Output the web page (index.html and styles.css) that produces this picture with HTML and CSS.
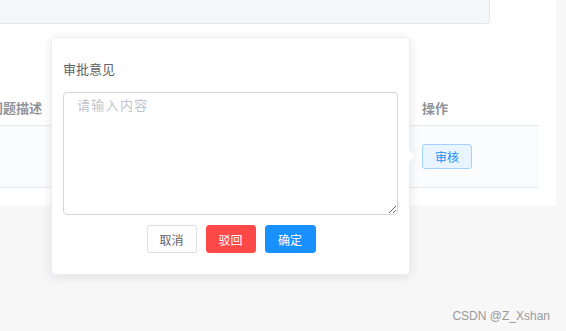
FILE: index.html
```html
<!DOCTYPE html>
<html lang="zh-CN">
<head>
    <meta charset="UTF-8">
    <title>审批</title>
    <link rel="stylesheet" href="styles.css">
</head>
<body>
    <div class="panel">
        <div class="filter-box"></div>

        <table class="grid">
            <thead>
                <tr>
                    <th class="col-desc">问题描述</th>
                    <th class="col-mid"></th>
                    <th class="col-op">操作</th>
                </tr>
            </thead>
            <tbody>
                <tr class="hover">
                    <td></td>
                    <td></td>
                    <td class="col-op"><button class="btn-audit">审核</button></td>
                </tr>
            </tbody>
        </table>
    </div>

    <div class="popover">
        <div class="popover-title">审批意见</div>
        <textarea class="opinion" placeholder="请输入内容"></textarea>
        <div class="actions">
            <button class="btn btn-plain">取消</button>
            <button class="btn btn-danger">驳回</button>
            <button class="btn btn-primary">确定</button>
        </div>
        <span class="arrow"></span>
    </div>

    <div class="watermark">CSDN @Z_Xshan</div>
</body>
</html>
```

FILE: styles.css
```css
body {
    margin: 0;
    height: 331px;
    background: #f7f7f8;
    font-family: "Microsoft YaHei", "Noto Sans CJK SC", sans-serif;
    position: relative;
    overflow: hidden;
}

.panel {
    width: 556px;
    height: 206px;
    background: #fff;
    overflow: hidden;
}

.filter-box {
    width: 489px;
    height: 23px;
    background: #f5f6fa;
    border: 1px solid #e4e7ed;
    border-top: none;
    border-left: none;
    border-bottom-right-radius: 4px;
}

.grid {
    margin-top: 66px;
    margin-left: -10px;
    width: 549px;
    border-collapse: collapse;
    font-size: 13px;
}

.grid th {
    height: 35px;
    padding: 0;
    text-align: left;
    color: #909399;
    font-weight: bold;
    border-bottom: 1px solid #e6e9ef;
}

.grid td {
    height: 61px;
    border-bottom: 1px solid #e6e9ef;
    padding: 0;
}

.grid .hover td {
    background: #fafcfe;
}

.col-desc {
    width: 198px;
}

.col-op {
    width: 117px;
}

.btn-audit {
    width: 50px;
    height: 25px;
    padding: 0;
    border: 1px solid #a3d0fd;
    border-radius: 3px;
    background: #e8f4ff;
    color: #1890ff;
    font-size: 12px;
    font-family: inherit;
}

.popover {
    position: absolute;
    left: 51px;
    top: 37px;
    width: 335px;
    height: 214px;
    padding: 11px;
    background: #fff;
    border: 1px solid #ebeef5;
    border-radius: 4px;
    box-shadow: 0 2px 12px rgba(0, 0, 0, 0.1);
}

.popover-title {
    margin-top: 10px;
    line-height: 20px;
    font-size: 13px;
    color: #606266;
}

.opinion {
    display: block;
    box-sizing: border-box;
    width: 335px;
    height: 123px;
    margin-top: 13px;
    padding: 2px 13px;
    border: 1px solid #d4d6de;
    border-radius: 4px;
    font-family: inherit;
    font-size: 13px;
    letter-spacing: 1.3px;
    line-height: 20px;
    color: #606266;
    resize: vertical;
}

.opinion::placeholder {
    color: #c0c4cc;
}

.actions {
    display: flex;
    justify-content: center;
    gap: 9px;
    margin-top: 10px;
    padding-left: 1px;
}

.btn {
    width: 51px;
    height: 28px;
    padding: 0;
    border: 1px solid transparent;
    border-radius: 3px;
    font-size: 12px;
    font-family: inherit;
    color: #fff;
}

.btn-plain {
    width: 50px;
    background: #fff;
    border-color: #dcdfe6;
    color: #606266;
}

.btn-danger {
    width: 50px;
    background: #ff4949;
    border-color: #ff4949;
}

.btn-primary {
    background: #1890ff;
    border-color: #1890ff;
}

.arrow {
    position: absolute;
    right: -6px;
    top: 112px;
    width: 0;
    height: 0;
    border-top: 6px solid transparent;
    border-bottom: 6px solid transparent;
    border-left: 6px solid #fff;
}

.watermark {
    position: absolute;
    right: 16px;
    bottom: 8px;
    font-family: "Liberation Sans", Arial, sans-serif;
    font-size: 12px;
    color: #9a9a9a;
}
```
